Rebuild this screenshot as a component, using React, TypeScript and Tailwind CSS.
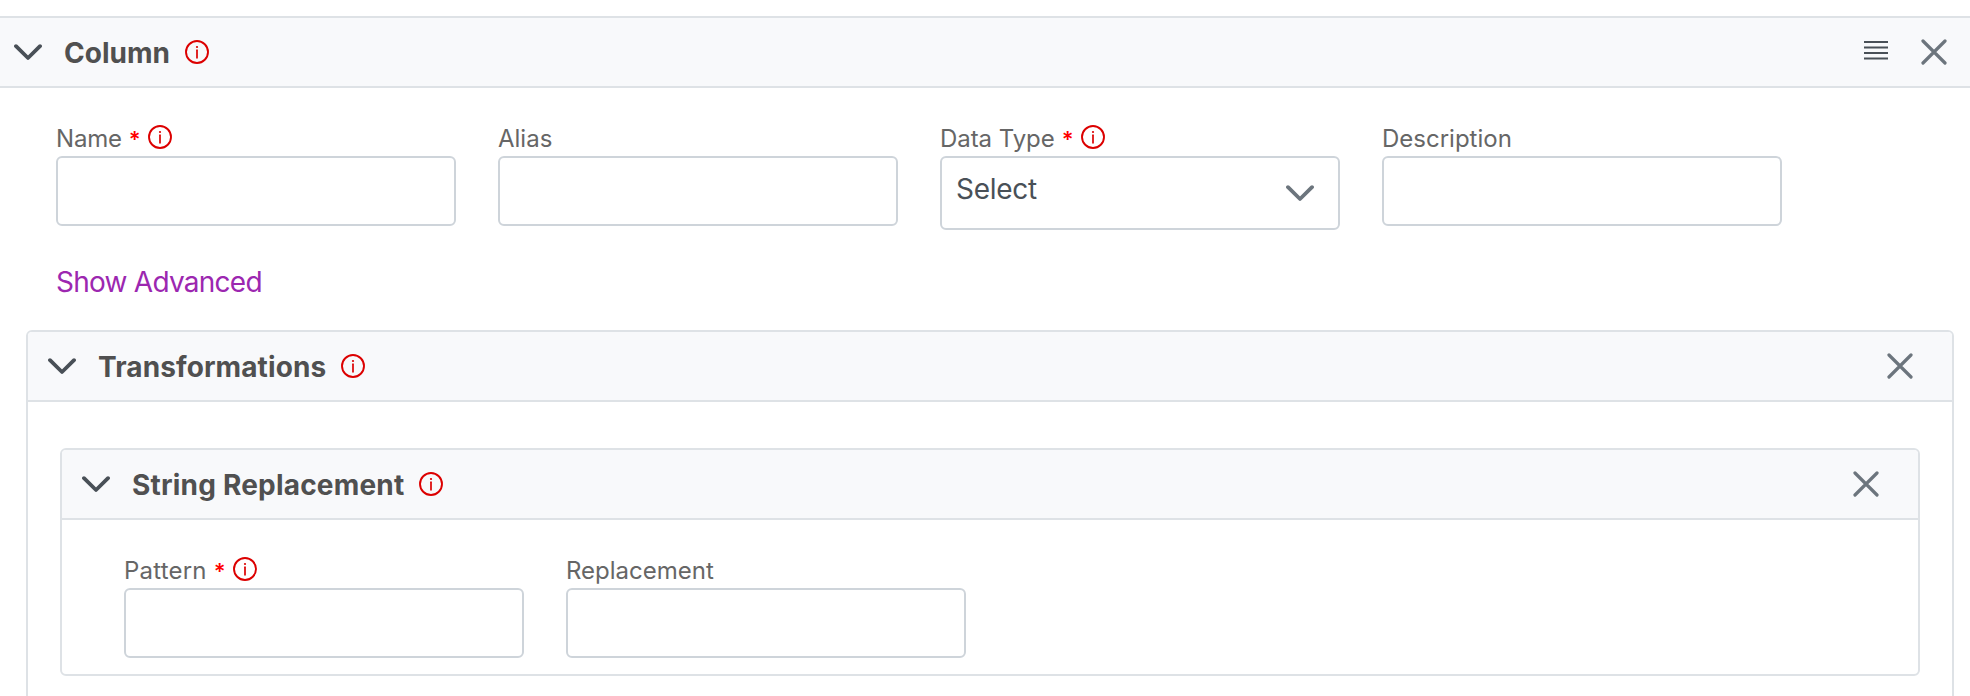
import type { ReactNode } from "react";

function Chevron({ className }: { className: string }) {
  return (
    <svg width="28" height="18" viewBox="0 0 28 18" fill="none" stroke="currentColor" strokeWidth="3.8" strokeLinecap="round" strokeLinejoin="round" className={`shrink-0 ${className}`}>
      <path d="M2 2.2 14 14 26 2.2" />
    </svg>
  );
}

function Info({ className = "" }: { className?: string }) {
  return (
    <svg width="24" height="24" viewBox="0 0 24 24" fill="none" stroke="#dc0000" className={`shrink-0 ${className}`}>
      <circle cx="12" cy="12" r="11" strokeWidth="1.9" />
      <path d="M12 10.2v7.6" strokeWidth="1.7" strokeLinecap="round" />
      <circle cx="12" cy="7" r="1.1" fill="#dc0000" stroke="none" />
    </svg>
  );
}

function Close() {
  return (
    <svg width="26" height="26" viewBox="0 0 26 26" fill="none" stroke="#6c757d" strokeWidth="3.2" strokeLinecap="round" className="shrink-0">
      <path d="M2 2 24 24M24 2 2 24" />
    </svg>
  );
}

function Menu() {
  return (
    <svg width="24" height="20" viewBox="0 0 24 20" stroke="#495057" strokeWidth="2" className="mb-1 shrink-0">
      <path d="M0 2H24M0 7.5H24M0 13H24M0 18.5H24" />
    </svg>
  );
}

function Field({ label, tracking, required, children }: { label: string; tracking: string; required?: boolean; children?: ReactNode }) {
  return (
    <div className="w-[400px]">
      <div className="flex h-9 items-center pt-0.5 text-2xl leading-9 text-[#666]">
        <span className={tracking}>{label}</span>
        {required && (
          <>
            <span className="ml-[7px] w-3 text-center text-[22px] leading-9 font-semibold text-[#f00]">*</span>
            <Info className="mb-[5px] ml-[7px]" />
          </>
        )}
      </div>
      {children ?? <input aria-label={label} className="block h-[70px] w-full rounded-md border-2 border-[#ced4da] bg-white" />}
    </div>
  );
}

function Header({ title, tracking, className, children }: { title: string; tracking: string; className: string; children: ReactNode }) {
  return (
    <div className={`flex items-center justify-between border-[#dee2e6] bg-[#f8f9fb] ${className}`}>
      <div className="flex items-center">
        <Chevron className="mt-px text-[#495057]" />
        <h2 className={`mt-0.5 ml-[22px] text-[28px] leading-9 font-bold text-[#505050] ${tracking}`}>{title}</h2>
        <Info className="ml-[15px]" />
      </div>
      <div className="flex items-center">{children}</div>
    </div>
  );
}

export default function App() {
  return (
    <div className="h-[696px] overflow-hidden bg-white pt-4 font-['Inter','Liberation_Sans',sans-serif]">
      <Header title="Column" tracking="tracking-normal" className="h-18 border-y-2 pr-[23px] pl-3.5">
        <Menu />
        <div className="ml-[33px]">
          <Close />
        </div>
      </Header>

      <div className="flex gap-[42px] pt-8 pl-14">
        <Field label="Name" tracking="tracking-[-0.2px]" required />
        <Field label="Alias" tracking="tracking-normal" />
        <Field label="Data Type" tracking="tracking-[-0.05px]" required>
          <button className="flex h-[74px] w-full items-center justify-between rounded-md border-2 border-[#ced4da] bg-white pr-6 pl-3.5 text-[28px] leading-9 text-[#495057]">
            <span className="mb-2 tracking-[-0.3px]">Select</span>
            <Chevron className="mt-0.5 text-[#6c757d]" />
          </button>
        </Field>
        <Field label="Description" tracking="tracking-normal" />
      </div>

      <a className="mt-8 ml-14 block h-10 w-fit text-[28px] leading-10 tracking-[-0.75px] text-[#9c27b0]">Show Advanced</a>

      <section className="mt-7 mr-4 ml-[26px] h-[400px] rounded-md border-2 border-[#dee2e6]">
        <Header title="Transformations" tracking="tracking-[0.1px]" className="h-[70px] rounded-t border-b-2 pr-[39px] pl-5">
          <Close />
        </Header>
        <section className="mx-8 mt-[46px] h-[228px] rounded-md border-2 border-[#dee2e6]">
          <Header title="String Replacement" tracking="tracking-[0.2px]" className="h-[70px] rounded-t border-b-2 pr-[39px] pl-5">
            <Close />
          </Header>
          <div className="flex gap-[42px] pt-8 pl-[62px]">
            <Field label="Pattern" tracking="tracking-[0.2px]" required />
            <Field label="Replacement" tracking="tracking-normal" />
          </div>
        </section>
      </section>
    </div>
  );
}
